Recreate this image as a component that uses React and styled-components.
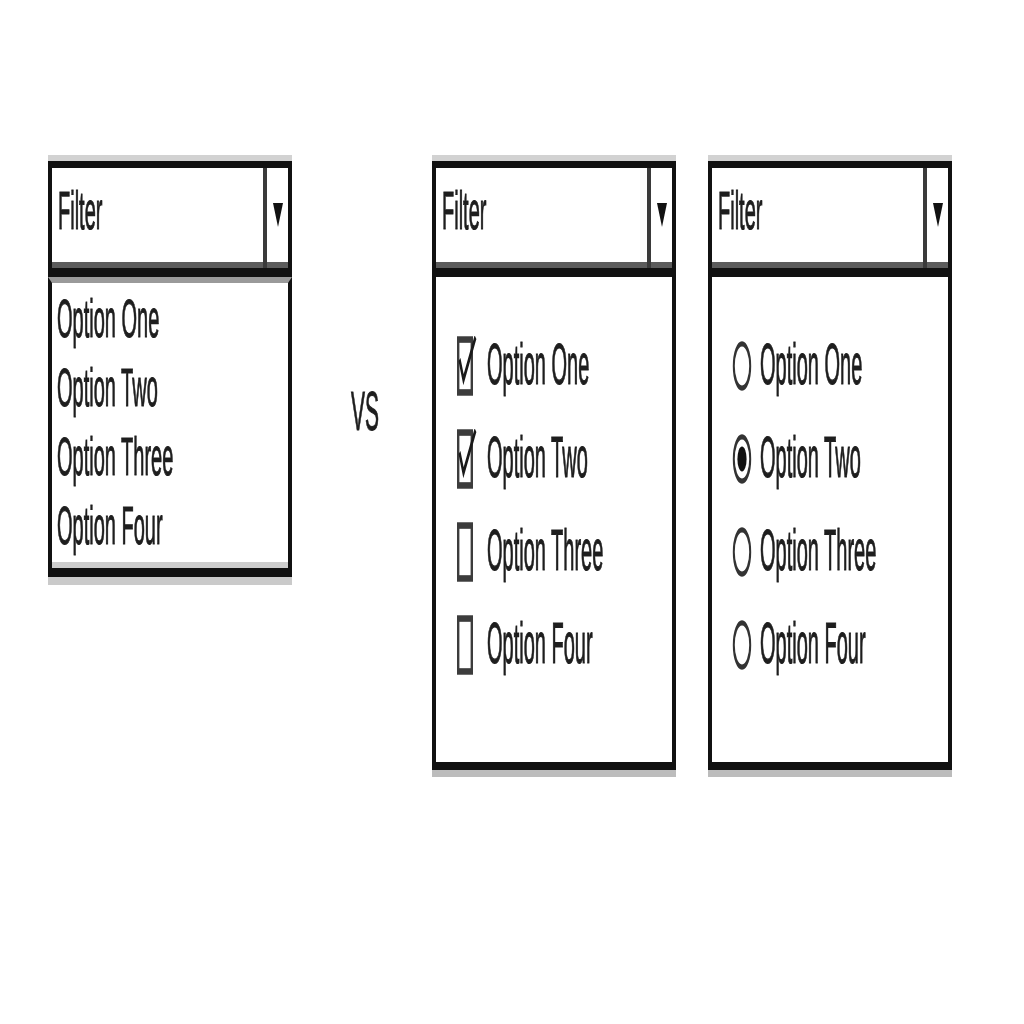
import React from "react";
import styled, { createGlobalStyle } from "styled-components";

const GlobalStyle = createGlobalStyle`
  *, *::before, *::after { box-sizing: border-box; }
  html, body { margin: 0; padding: 0; background: #fff; }
  body { font-family: "Liberation Sans", Arial, sans-serif; color: #1e1e1e; }
`;

const options = ["Option One", "Option Two", "Option Three", "Option Four"];

const Arrow = () => (
  <svg width="10" height="24" viewBox="0 0 10 24">
    <polygon points="0,0 10,0 5,24" fill="#111" />
  </svg>
);

const Checkbox = ({ checked }) => (
  <svg width="20" height="60" viewBox="0 0 20 22" preserveAspectRatio="none">
    <rect x="1.2" y="1.3" width="13.6" height="19.4" fill="#fff" stroke="#3c3c3c" strokeWidth="2.4" />
    {checked && (
      <polyline points="2.5,8.6 6.5,16 18.5,0.4" fill="none" stroke="#1a1a1a" strokeWidth="2.2" />
    )}
  </svg>
);

const Radio = ({ checked }) => (
  <svg width="20" height="54" viewBox="0 0 20 20" preserveAspectRatio="none">
    <circle cx="10" cy="10" r="8.2" fill="#fff" stroke="#333" strokeWidth="2" />
    {checked && <circle cx="10" cy="10" r="4.6" fill="#111" />}
  </svg>
);

const FilterHeader = () => (
  <Header>
    <HeaderLabel>
      <Label>Filter</Label>
    </HeaderLabel>
    <ArrowCell>
      <Arrow />
    </ArrowCell>
  </Header>
);

const App = () => {
  return (
    <>
      <GlobalStyle />
      <Page>
        <Dropdown>
          <FilterHeader />
          <PlainList>
            {options.map((o) => (
              <PlainRow key={o}>
                <Label $stretch={2.65}>{o}</Label>
              </PlainRow>
            ))}
          </PlainList>
        </Dropdown>

        <Versus>
          <Label $size={21} $stretch={2.6}>VS</Label>
        </Versus>

        <Pair>
          <Dropdown>
            <FilterHeader />
            <ChoiceList $indent={21}>
              {options.map((o, i) => (
                <ChoiceRow key={o} $gap={10}>
                  <Checkbox checked={i < 2} />
                  <Label $stretch={2.85}>{o}</Label>
                </ChoiceRow>
              ))}
            </ChoiceList>
          </Dropdown>

          <Dropdown>
            <FilterHeader />
            <ChoiceList $indent={20}>
              {options.map((o, i) => (
                <ChoiceRow key={o} $gap={8}>
                  <Radio checked={i === 1} />
                  <Label $stretch={2.85}>{o}</Label>
                </ChoiceRow>
              ))}
            </ChoiceList>
          </Dropdown>
        </Pair>
      </Page>
    </>
  );
};

const Page = styled.div`
  display: flex;
  align-items: flex-start;
  padding: 161px 0 0 48px;
  min-height: 1024px;
  filter: blur(0.5px);
`;

const Pair = styled.div`
  display: flex;
  align-items: flex-start;
  gap: 32px;
`;

const Dropdown = styled.div`
  width: 244px;
  display: flex;
  flex-direction: column;
`;

const Header = styled.div`
  display: flex;
  height: 116px;
  border: 4px solid #111;
  border-top-width: 7px;
  border-bottom-width: 9px;
  background: #fff;
  box-shadow: 0 -6px 0 #d2d2d2, inset 0 -6px 0 #5c5c5c;
`;

const HeaderLabel = styled.div`
  flex: 1;
  display: flex;
  align-items: center;
  padding: 0 0 14px 6px;
`;

const ArrowCell = styled.div`
  flex: none;
  width: 25px;
  border-left: 4px solid #3a3a3a;
  display: flex;
  align-items: center;
  justify-content: center;
  padding-bottom: 6px;
`;

const Label = styled.span`
  display: inline-block;
  font-size: ${(p) => p.$size || 20}px;
  line-height: 23px;
  white-space: nowrap;
  -webkit-text-stroke: 0.4px #1e1e1e;
  transform: scaleY(${(p) => p.$stretch || 2.7});
`;

const PlainList = styled.div`
  border: 4px solid #111;
  border-top: 6px solid #9a9a9a;
  border-bottom-width: 9px;
  padding: 2px 0 7px 5px;
  background: #fff;
  box-shadow: 0 8px 0 #cacaca, inset 0 -6px 0 #cdcdcd;
`;

const PlainRow = styled.div`
  height: 69px;
  display: flex;
  align-items: center;
`;

const Versus = styled.div`
  width: 140px;
  display: flex;
  justify-content: center;
  padding: 238px 0 0 6px;
`;

const ChoiceList = styled.div`
  border: 4px solid #111;
  border-top: none;
  border-bottom-width: 8px;
  padding: 42px 0 71px ${(p) => p.$indent}px;
  background: #fff;
  box-shadow: 0 7px 0 #bcbcbc;
`;

const ChoiceRow = styled.div`
  height: 93px;
  display: flex;
  align-items: center;
  gap: ${(p) => p.$gap}px;
`;

export default App;
